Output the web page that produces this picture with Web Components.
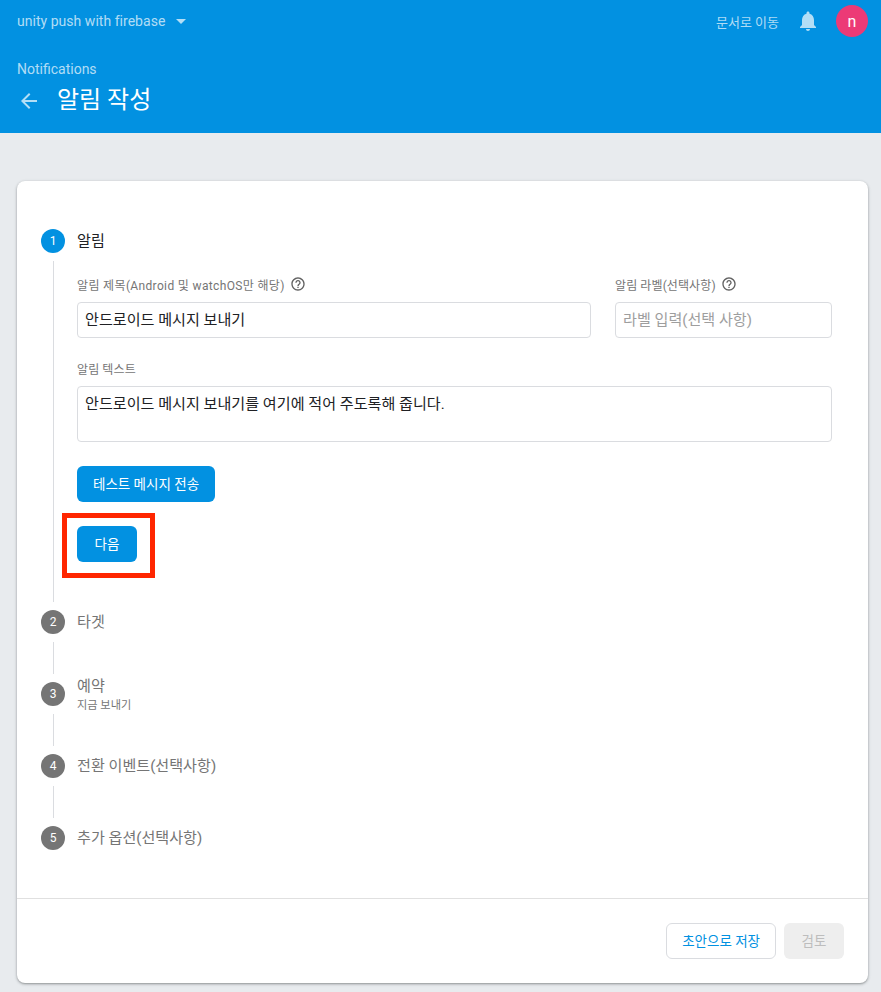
<!DOCTYPE html>
<html lang="ko">
<head>
<meta charset="utf-8">
<title>알림 작성</title>
<style>
    html, body { margin: 0; height: 100%; overflow: hidden; }
    body {
        background: #e8ebee;
        font-family: Roboto, "Noto Sans CJK KR", sans-serif;
        color: #202124;
    }
    fb-form-row { margin-bottom: 22px; }
    fb-field[wide] { margin-bottom: 24px; }
    fb-button[spaced] { margin-bottom: 24px; }
</style>
</head>
<body>
<fb-app-bar project="unity push with firebase" section="Notifications" heading="알림 작성"></fb-app-bar>
<fb-page>
    <fb-card>
        <fb-step number="1" label="알림" active>
            <fb-form-row>
                <fb-field label="알림 제목(Android 및 watchOS만 해당)" help spread>안드로이드 메시지 보내기</fb-field>
                <fb-field label="알림 라벨(선택사항)" help placeholder>라벨 입력(선택 사항)</fb-field>
            </fb-form-row>
            <fb-field label="알림 텍스트" wide tall>안드로이드 메시지 보내기를 여기에 적어 주도록해 줍니다.</fb-field>
            <fb-button primary spaced>테스트 메시지 전송</fb-button>
            <fb-highlight><fb-button primary>다음</fb-button></fb-highlight>
        </fb-step>
        <fb-step number="2" label="타겟"></fb-step>
        <fb-step number="3" label="예약" note="지금 보내기"></fb-step>
        <fb-step number="4" label="전환 이벤트(선택사항)"></fb-step>
        <fb-step number="5" label="추가 옵션(선택사항)" last></fb-step>
        <fb-button slot="actions" outline>초안으로 저장</fb-button>
        <fb-button slot="actions" disabled>검토</fb-button>
    </fb-card>
</fb-page>

<script>
class FbAppBar extends HTMLElement {
    connectedCallback() {
        this.attachShadow({ mode: 'open' });
        this.shadowRoot.innerHTML = `
            <style>
                :host { display: block; height: 133px; background: #0291e1; color: #fff; }
                .top { display: flex; align-items: center; height: 42px; padding: 0 13px 0 17px; }
                .project { font-size: 14px; letter-spacing: .03px; color: rgba(255,255,255,.7); }
                .caret { width: 24px; height: 24px; margin-left: 4px; fill: rgba(255,255,255,.7); }
                .spacer { flex: 1; }
                .docs { font-size: 13px; color: rgba(255,255,255,.7); }
                .bell { width: 24px; height: 24px; margin: 0 16px 0 17px; fill: rgba(255,255,255,.7); }
                .avatar {
                    display: flex; align-items: center; justify-content: center;
                    width: 32px; height: 32px; border-radius: 50%;
                    background: #ec3a76; font-size: 16px;
                }
                .section { padding: 18px 17px 0; font-size: 14px; line-height: 18px; color: rgba(255,255,255,.7); }
                .title { display: flex; align-items: center; gap: 16px; height: 32px; padding: 4px 17px 0; }
                .back { width: 24px; height: 24px; margin-top: 6px; fill: rgba(255,255,255,.7); }
                h1 { margin: 0 0 2px; font-size: 24px; font-weight: 400; }
            </style>
            <div class="top">
                <span class="project">${this.getAttribute('project')}</span>
                <svg class="caret" viewBox="0 0 24 24"><path d="M7 10l5 5 5-5z"/></svg>
                <span class="spacer"></span>
                <span class="docs">문서로 이동</span>
                <svg class="bell" viewBox="0 0 24 24"><path d="M12 22c1.1 0 2-.9 2-2h-4c0 1.1.89 2 2 2zm6-6v-5c0-3.07-1.64-5.64-4.5-6.32V4c0-.83-.67-1.5-1.5-1.5s-1.5.67-1.5 1.5v.68C7.63 5.36 6 7.92 6 11v5l-2 2v1h16v-1l-2-2z"/></svg>
                <span class="avatar">n</span>
            </div>
            <div class="section">${this.getAttribute('section')}</div>
            <div class="title">
                <svg class="back" viewBox="0 0 24 24"><path d="M20 11H7.83l5.59-5.59L12 4l-8 8 8 8 1.41-1.41L7.83 13H20v-2z"/></svg>
                <h1>${this.getAttribute('heading')}</h1>
            </div>
        `;
    }
}
customElements.define('fb-app-bar', FbAppBar);

class FbPage extends HTMLElement {
    connectedCallback() {
        this.attachShadow({ mode: 'open' });
        this.shadowRoot.innerHTML = `
            <style>
                :host { display: block; padding: 48px 13px 9px 17px; }
            </style>
            <slot></slot>
        `;
    }
}
customElements.define('fb-page', FbPage);

class FbCard extends HTMLElement {
    connectedCallback() {
        this.attachShadow({ mode: 'open' });
        this.shadowRoot.innerHTML = `
            <style>
                :host {
                    display: block; background: #fff; border-radius: 8px;
                    box-shadow: 0 1px 2px rgba(60,64,67,.4), 0 1px 3px 1px rgba(60,64,67,.12);
                }
                .steps { padding: 48px 36px 48px 24px; }
                .actions {
                    display: flex; justify-content: flex-end; gap: 8px;
                    padding: 24px; border-top: 1px solid #e0e0e0;
                }
            </style>
            <div class="steps"><slot></slot></div>
            <div class="actions"><slot name="actions"></slot></div>
        `;
    }
}
customElements.define('fb-card', FbCard);

class FbStep extends HTMLElement {
    connectedCallback() {
        const active = this.hasAttribute('active');
        const note = this.getAttribute('note');
        this.attachShadow({ mode: 'open' });
        this.shadowRoot.innerHTML = `
            <style>
                :host { display: grid; grid-template-columns: 24px 1fr; column-gap: 12px; }
                .num {
                    display: flex; align-items: center; justify-content: center;
                    width: 24px; height: 24px; border-radius: 50%;
                    background: ${active ? '#0291e1' : '#757575'};
                    color: #fff; font-size: 12px;
                }
                .head { display: flex; flex-direction: column; justify-content: center; height: 24px; }
                .label {
                    font-size: 15.1px; line-height: 18px;
                    ${note ? 'margin: 1px 0 -1px;' : 'padding-bottom: 1px;'}
                    color: ${active ? '#202124' : '#757575'};
                }
                .note { margin: 3px 0 -3px; font-size: 11.2px; line-height: 18px; color: #757575; }
                .line { width: 1px; margin: 8px 0 8px 12px; background: #dadce0; }
                .body { display: block; min-height: 48px; padding-top: ${active ? '23px' : '0'}; padding-bottom: ${active ? '48px' : '0'}; box-sizing: border-box; }
            </style>
            <div class="num">${this.getAttribute('number')}</div>
            <div class="head">
                <div class="label">${this.getAttribute('label')}</div>
                ${note ? `<div class="note">${note}</div>` : ''}
            </div>
            ${this.hasAttribute('last') ? '' : `
                <div class="line"></div>
                <div class="body"><slot></slot></div>
            `}
        `;
    }
}
customElements.define('fb-step', FbStep);

class FbFormRow extends HTMLElement {
    connectedCallback() {
        this.attachShadow({ mode: 'open' });
        this.shadowRoot.innerHTML = `
            <style>
                :host { display: grid; grid-template-columns: 1fr 217px; column-gap: 24px; }
            </style>
            <slot></slot>
        `;
    }
}
customElements.define('fb-form-row', FbFormRow);

class FbField extends HTMLElement {
    connectedCallback() {
        const help = this.hasAttribute('help')
            ? `<svg viewBox="0 0 24 24"><path d="M11 18h2v-2h-2v2zm1-16C6.48 2 2 6.48 2 12s4.48 10 10 10 10-4.48 10-10S17.52 2 12 2zm0 18c-4.41 0-8-3.59-8-8s3.59-8 8-8 8 3.59 8 8-3.59 8-8 8zm0-14c-2.21 0-4 1.79-4 4h2c0-1.1.9-2 2-2s2 .9 2 2c0 2-3 1.75-3 5h2c0-2.25 3-2.5 3-5 0-2.21-1.79-4-4-4z"/></svg>`
            : '';
        this.attachShadow({ mode: 'open' });
        this.shadowRoot.innerHTML = `
            <style>
                :host { display: block; }
                .label {
                    display: flex; align-items: center; gap: 5px;
                    box-sizing: border-box; height: 18px; padding-bottom: 2px; margin-bottom: 8px;
                    font-size: 12px; letter-spacing: ${this.hasAttribute('spread') ? '.35px' : '.1px'};
                    color: #757575;
                }
                svg { width: 16px; height: 16px; fill: #616161; }
                .box {
                    box-sizing: border-box; height: ${this.hasAttribute('tall') ? '56px' : '36px'};
                    padding: 7px; border: 1px solid #dadce0; border-radius: 4px;
                    font-size: 15.1px; line-height: 20px;
                    color: ${this.hasAttribute('placeholder') ? '#9e9e9e' : '#202124'};
                }
            </style>
            <div class="label">${this.getAttribute('label')}${help}</div>
            <div class="box"><slot></slot></div>
        `;
    }
}
customElements.define('fb-field', FbField);

class FbButton extends HTMLElement {
    connectedCallback() {
        this.attachShadow({ mode: 'open' });
        this.shadowRoot.innerHTML = `
            <style>
                :host {
                    display: flex; align-items: center; justify-content: center;
                    box-sizing: border-box; width: fit-content; min-width: 60px; height: 36px; padding: 0 16px 2px;
                    border-radius: 6px; font-size: 13.5px; font-weight: 400;
                }
                :host([primary]) { background: #0291e1; color: #fff; }
                :host([outline]) { background: #fff; color: #0291e1; border: 1px solid #dadce0; padding: 0 15px 2px; }
                :host([disabled]) { background: #eeeeee; color: #bdbdbd; }
            </style>
            <slot></slot>
        `;
    }
}
customElements.define('fb-button', FbButton);

class FbHighlight extends HTMLElement {
    connectedCallback() {
        this.attachShadow({ mode: 'open' });
        this.shadowRoot.innerHTML = `
            <style>
                :host { display: block; position: relative; width: fit-content; }
                .mark {
                    position: absolute; top: -13px; right: -18px; bottom: -16px; left: -15px;
                    border: 5px solid #ff2600; pointer-events: none;
                }
            </style>
            <slot></slot>
            <div class="mark"></div>
        `;
    }
}
customElements.define('fb-highlight', FbHighlight);
</script>
</body>
</html>
